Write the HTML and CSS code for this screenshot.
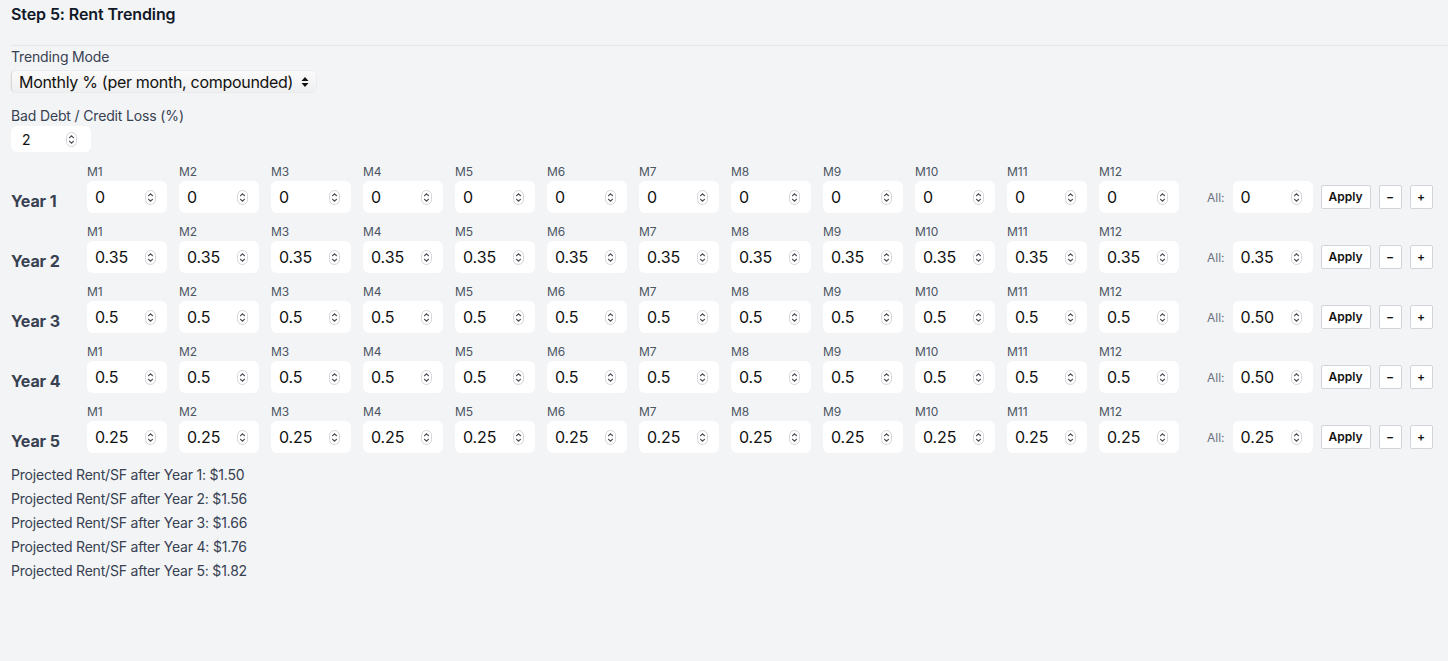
FILE: index.html
```html
<!DOCTYPE html>
<html>
<head>
<meta charset="utf-8">
<link rel="stylesheet" href="styles.css">
</head>
<body>
<div class="page">
  <h2 class="title">Step 5: Rent Trending</h2>
  <div class="content">
    <div class="field">
      <label class="flabel">Trending Mode</label>
      <div class="select">
        <span class="select-text">Monthly % (per month, compounded)</span>
        <svg class="select-arrow" width="8" height="12" viewBox="0 0 8 12"><path d="M4 1 L7.5 5 L0.5 5 Z M4 11 L7.5 7 L0.5 7 Z" fill="#111"/></svg>
      </div>
    </div>
    <div class="field field2">
      <label class="flabel">Bad Debt / Credit Loss (%)</label>
      <div class="num num-small"><span class="val">2</span><span class="spin"></span></div>
    </div>
    <div class="years" id="years"></div>
    <div class="projected">
      <div>Projected Rent/SF after Year 1: $1.50</div>
      <div>Projected Rent/SF after Year 2: $1.56</div>
      <div>Projected Rent/SF after Year 3: $1.66</div>
      <div>Projected Rent/SF after Year 4: $1.76</div>
      <div>Projected Rent/SF after Year 5: $1.82</div>
    </div>
  </div>
</div>
<script src="app.js"></script>
</body>
</html>
```
FILE: app.js
```js
const spinSvg = '<svg width="11" height="15" viewBox="0 0 11 15"><rect x="0.5" y="0.5" width="10" height="14" rx="5" fill="#fff" stroke="#d4d4d8"/><path d="M3.2 6 L5.5 3.8 L7.8 6" fill="none" stroke="#52525b" stroke-width="1.1"/><path d="M3.2 9 L5.5 11.2 L7.8 9" fill="none" stroke="#52525b" stroke-width="1.1"/></svg>';
const data = [
  ["0", "0"],
  ["0.35", "0.35"],
  ["0.5", "0.50"],
  ["0.5", "0.50"],
  ["0.25", "0.25"]
];
const years = document.getElementById('years');
document.querySelectorAll('.spin').forEach(s => s.innerHTML = spinSvg);
data.forEach((d, i) => {
  const row = document.createElement('div');
  row.className = 'year-row';
  let html = '<div class="year-label">Year ' + (i + 1) + '</div>';
  for (let m = 1; m <= 12; m++) {
    html += '<div class="month"><div class="mlabel">M' + m + '</div><div class="num"><span class="val">' + d[0] + '</span><span class="spin">' + spinSvg + '</span></div></div>';
  }
  html += '<div class="all"><span class="all-label">All:</span><div class="num"><span class="val">' + d[1] + '</span><span class="spin">' + spinSvg + '</span></div>' +
    '<button class="btn btn-apply">Apply</button><button class="btn btn-sq">−</button><button class="btn btn-sq">+</button></div>';
  row.innerHTML = html;
  years.appendChild(row);
});
```
FILE: styles.css
```css
* { box-sizing: border-box; }
html, body { margin: 0; padding: 0; }
body {
  background: #f3f4f6;
  font-family: Inter, "Noto Sans", sans-serif;
  color: #374151;
  width: 1448px;
  height: 661px;
  overflow: hidden;
}
.page { padding: 0 0 0 11px; }
.title {
  margin: 0;
  padding-top: 4px;
  height: 46px;
  font-size: 16px;
  line-height: 20px;
  font-weight: 600;
  color: #111827;
  letter-spacing: -0.1px;
  border-bottom: 1px solid #e5e7eb;
}
.content { padding-top: 1px; }
.field { display: flex; flex-direction: column; align-items: flex-start; }
.flabel { font-size: 14px; line-height: 20px; color: #374151; margin-bottom: 4px; letter-spacing: -0.15px; }
.field2 { margin-top: 14px; }
.field2 .flabel { margin-bottom: 0; }
.select {
  width: 305px;
  height: 21px;
  display: flex;
  align-items: center;
  justify-content: space-between;
  padding: 0 7px 0 7px;
  background: linear-gradient(#fafafa, #f0f0f0);
  border-left: 1px solid #d9d9d9;
  border-radius: 4px;
  box-shadow: 0 0 0 0.5px #e2e2e2;
}
.select-text { font-size: 16px; color: #111; font-family: Inter, sans-serif; letter-spacing: -0.3px; }
.select-arrow { flex: none; }
.num {
  width: 80px;
  height: 32px;
  background: #fff;
  border-radius: 6px;
  display: flex;
  align-items: center;
  justify-content: space-between;
  padding: 0 11px 0 8px;
}
.num .val { font-size: 16px; color: #111; letter-spacing: -0.1px; }
.spin { display: flex; align-items: center; }
.num-small { height: 26px; padding-left: 11px; padding-right: 14px; }
.num-small .val { font-size: 14px; }
.years {
  margin-top: 12px;
  display: flex;
  flex-direction: column;
  gap: 11px;
}
.year-row { display: flex; align-items: flex-end; gap: 12px; height: 49px; }
.year-label {
  width: 64px;
  font-size: 16px;
  line-height: 24px;
  font-weight: 700;
  color: #374151;
  letter-spacing: -0.1px;
}
.month { display: flex; flex-direction: column; gap: 1px; }
.mlabel { font-size: 12px; line-height: 16px; color: #4b5563; }
.all { display: flex; align-items: center; gap: 8px; margin-left: 16px; height: 32px; }
.all-label { font-size: 12px; color: #6b7280; }
.btn {
  font-family: Inter, sans-serif;
  background: #fff;
  border: 1px solid #d1d5db;
  border-radius: 2px;
  font-size: 12px;
  font-weight: 600;
  color: #111;
  height: 24px;
  padding: 0;
  line-height: 22px;
}
.btn-apply { width: 50px; }
.btn-sq { width: 23px; }
.projected { margin-top: 10px; font-size: 14px; line-height: 24px; color: #374151; letter-spacing: -0.2px; }
```
